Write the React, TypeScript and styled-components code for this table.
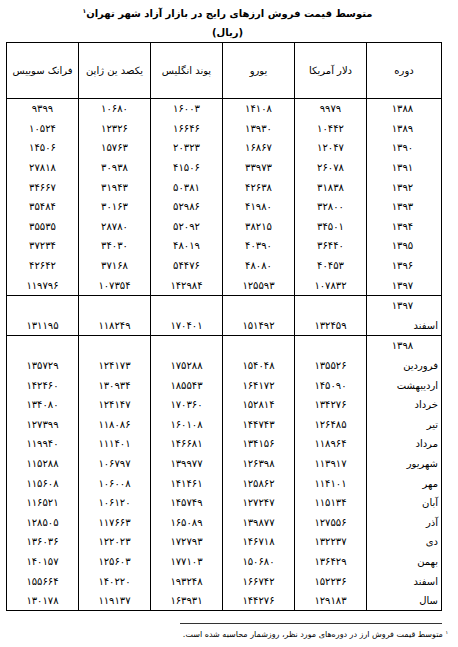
import styled, { createGlobalStyle } from "styled-components";

const GlobalStyle = createGlobalStyle`
  html, body {
    margin: 0;
    padding: 0;
    background: #fff;
  }
  body {
    font-family: "DejaVu Sans", sans-serif;
    color: #000;
  }
`;

const fa = (s: string) => s.replace(/\d/g, (d) => "۰۱۲۳۴۵۶۷۸۹"[Number(d)]);

// columns in RTL order after the period: dollar, euro, pound, yen, franc
const headers = ["دوره", "دلار آمریکا", "یورو", "پوند انگلیس", "یکصد ین ژاپن", "فرانک سوییس"];
const widths = [74, 71, 71, 71, 71, 71];

const yearly: [string, string[]][] = [
  ["1388", ["9979", "14108", "16003", "10680", "9399"]],
  ["1389", ["10442", "13930", "16646", "12326", "10524"]],
  ["1390", ["12047", "16867", "20323", "15763", "14506"]],
  ["1391", ["26078", "33973", "41506", "30938", "27818"]],
  ["1392", ["31838", "42638", "50381", "31943", "34667"]],
  ["1393", ["32800", "41980", "52986", "30163", "35484"]],
  ["1394", ["34501", "38215", "52092", "28780", "35535"]],
  ["1395", ["36440", "40390", "48019", "34030", "37234"]],
  ["1396", ["40453", "48080", "54476", "37168", "42642"]],
  ["1397", ["107832", "125593", "142984", "107354", "119796"]],
];

const monthly1398: [string, string[]][] = [
  ["فروردین", ["135526", "154048", "175288", "124173", "135729"]],
  ["اردیبهشت", ["145090", "164172", "185543", "130934", "142460"]],
  ["خرداد", ["134276", "152814", "170360", "124147", "134080"]],
  ["تیر", ["126485", "144743", "160108", "118086", "127399"]],
  ["مرداد", ["118964", "134156", "146681", "111401", "119940"]],
  ["شهریور", ["113917", "126398", "139977", "106797", "115288"]],
  ["مهر", ["114101", "125862", "141461", "106008", "115608"]],
  ["آبان", ["115134", "127247", "145749", "106120", "116521"]],
  ["آذر", ["127556", "139877", "165089", "117663", "128505"]],
  ["دی", ["132237", "146718", "172793", "122023", "136036"]],
  ["بهمن", ["136429", "150680", "177103", "125603", "140157"]],
  ["اسفند", ["152236", "166742", "193248", "140220", "155664"]],
  ["سال", ["129183", "144276", "163931", "119137", "130178"]],
];

const esfand1397 = ["132459", "151492", "170401", "118249", "131195"];

const Page = styled.div`
  width: 458px;
  box-sizing: border-box;
  padding: 4px 16px 20px 13px;
  direction: rtl;
`;

const Title = styled.h1`
  margin: 0;
  font-size: 10px;
  font-weight: bold;
  line-height: 19px;
  text-align: center;
`;

const Sup = styled.sup`
  font-size: 0.6em;
  line-height: 0;
  vertical-align: 0.7em;
`;

const Table = styled.table`
  width: 429px;
  border-collapse: collapse;
  table-layout: fixed;
  border: 1px solid #000;
  font-size: 10px;
`;

const Section = styled.tbody`
  border-top: 1px solid #000;
`;

const HeadCell = styled.th<{ $w: number }>`
  width: ${(p) => p.$w}px;
  height: 55px;
  padding: 0;
  font-weight: normal;
  text-align: center;
  border-left: 1px solid #000;
  border-right: 1px solid #000;
`;

const Cell = styled.td<{ $align?: string }>`
  height: 19.6px;
  padding: 0 3px 0 0;
  line-height: 19px;
  text-align: ${(p) => p.$align || "center"};
  white-space: nowrap;
  border-left: 1px solid #000;
  border-right: 1px solid #000;
`;

const NumCell = styled(Cell)`
  padding: 0;
`;

const Footnote = styled.div`
  margin-top: 12px;
`;

const Rule = styled.div`
  width: 262px;
  border-top: 1px solid #333;
`;

const Note = styled.p`
  margin: 5px -6px 0 0;
  font-size: 8px;
  line-height: 12px;
  white-space: nowrap;
`;

function Row({ period, values, align }: { period: string; values: string[]; align?: string }) {
  return (
    <tr>
      <Cell $align={align}>{fa(period)}</Cell>
      {values.map((v, i) => (
        <NumCell key={i}>{fa(v)}</NumCell>
      ))}
    </tr>
  );
}

const blank = ["", "", "", "", ""];

export default function App() {
  return (
    <>
      <GlobalStyle />
      <Page>
        <Title>
          متوسط قیمت فروش ارزهای رایج در بازار آزاد شهر تهران<Sup>۱</Sup>
          <br />
          (ریال)
        </Title>
        <Table>
          <thead>
            <tr>
              {headers.map((h, i) => (
                <HeadCell key={h} $w={widths[i]}>
                  {h}
                </HeadCell>
              ))}
            </tr>
          </thead>
          <Section>
            {yearly.map(([y, v]) => (
              <Row key={y} period={y} values={v} />
            ))}
          </Section>
          <Section>
            <Row period="1397" values={blank} />
            <Row period="اسفند" values={esfand1397} align="right" />
          </Section>
          <Section>
            <Row period="1398" values={blank} />
            {monthly1398.map(([m, v]) => (
              <Row key={m} period={m} values={v} align="right" />
            ))}
          </Section>
        </Table>
        <Footnote>
          <Rule />
          <Note>
            <Sup>۱</Sup> متوسط قیمت فروش ارز در دوره‌های مورد نظر، روزشمار محاسبه شده است.
          </Note>
        </Footnote>
      </Page>
    </>
  );
}
